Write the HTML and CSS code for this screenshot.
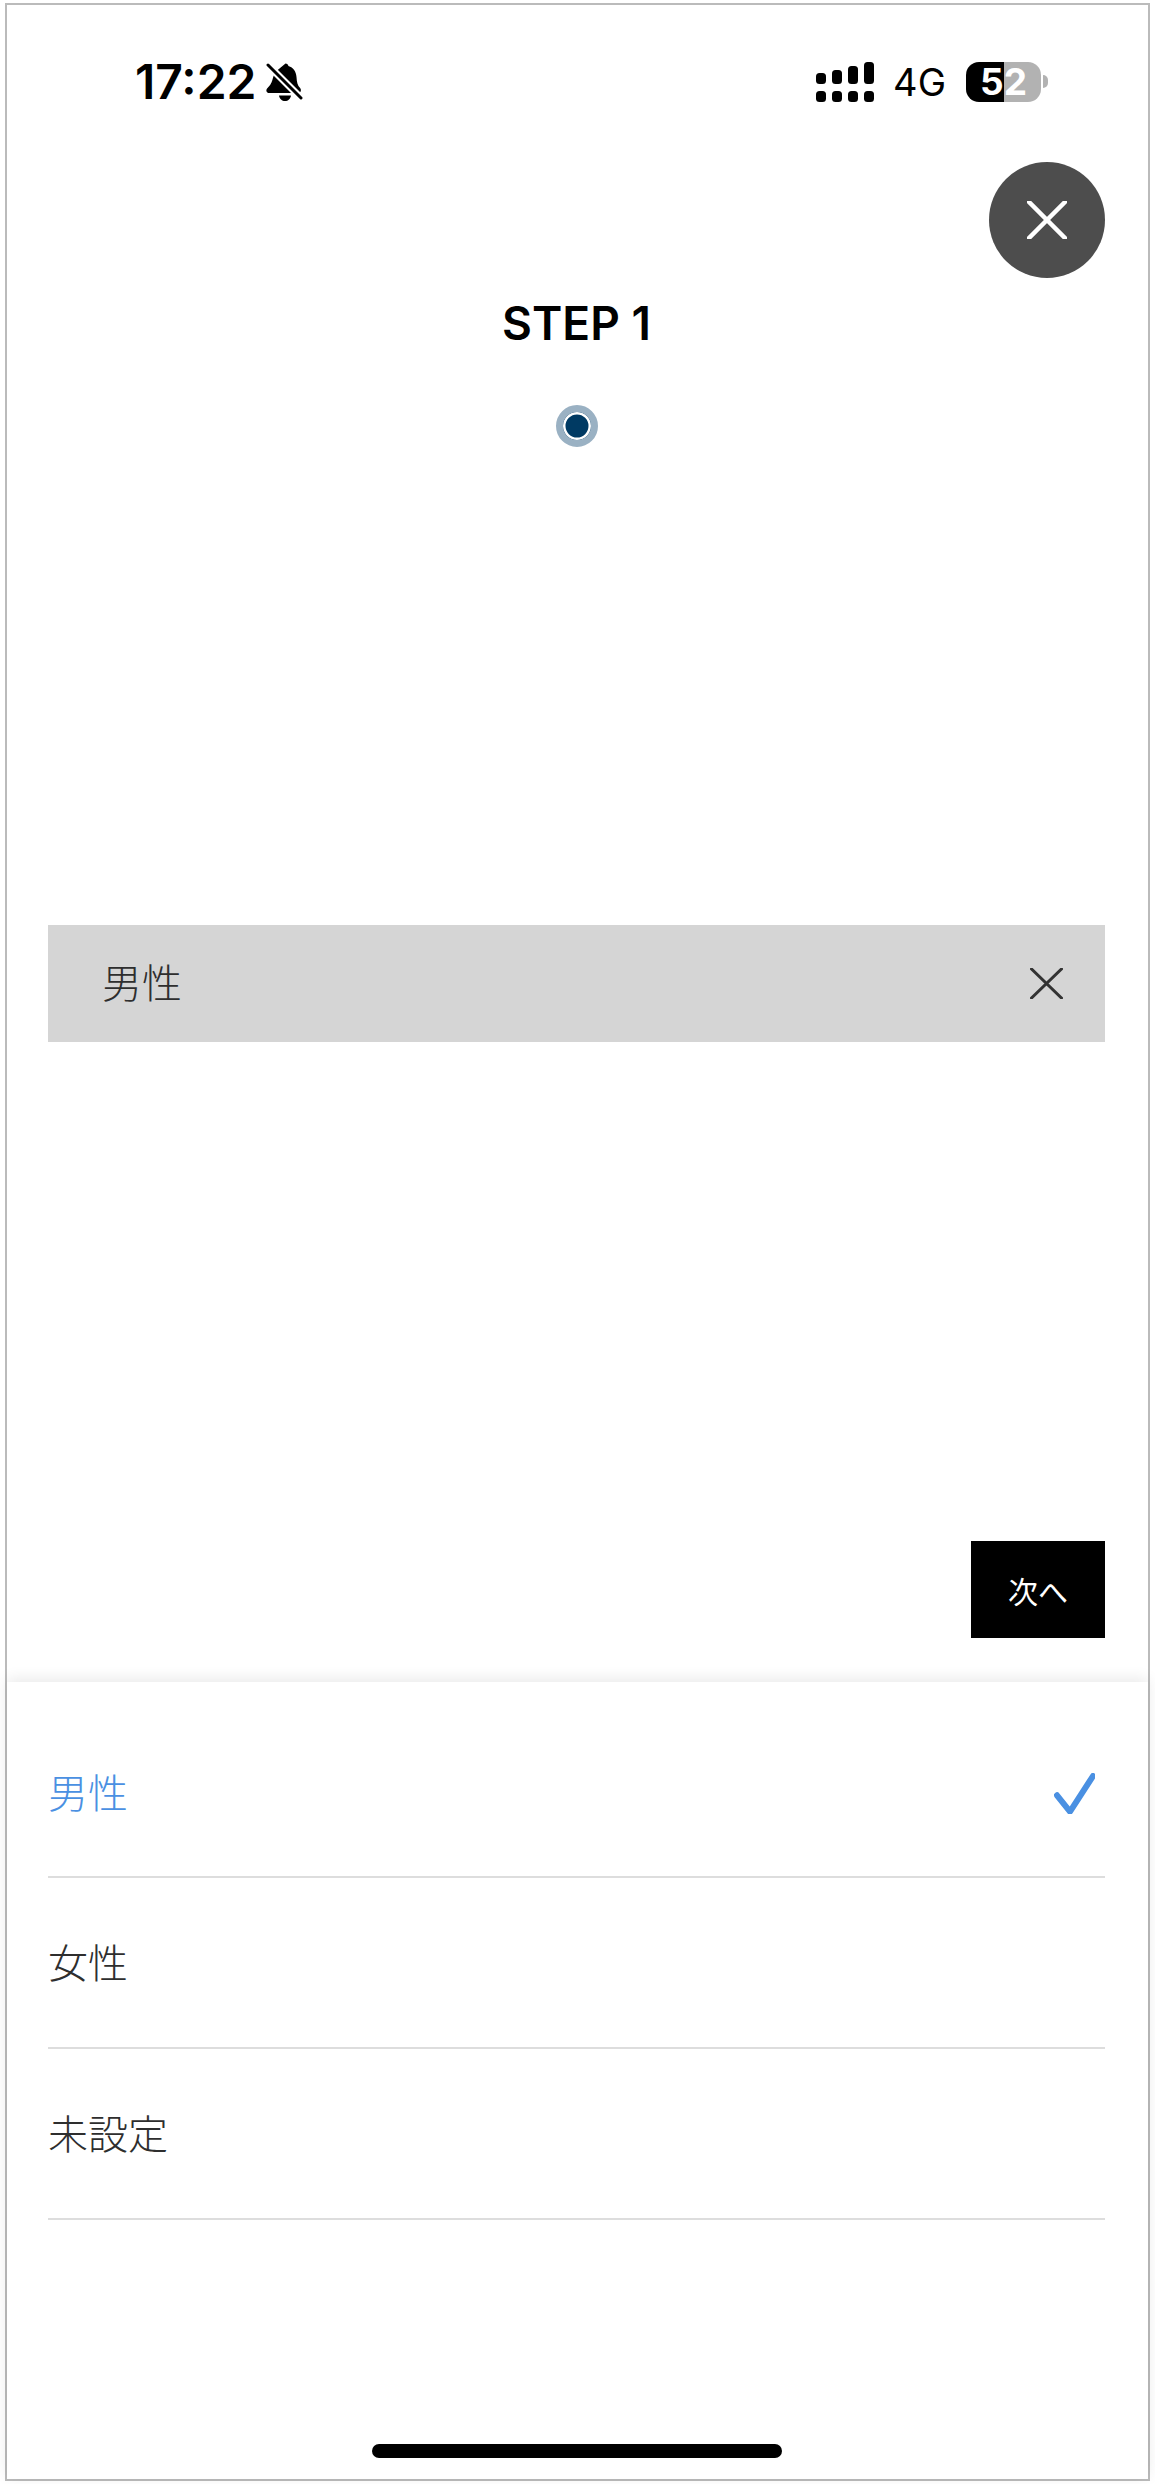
FILE: index.html
```html
<!DOCTYPE html>
<html lang="ja">
<head>
<meta charset="utf-8">
<title>STEP 1</title>
<link rel="stylesheet" href="styles.css">
</head>
<body>
<div class="frame">
  <header class="status">
    <div class="status-left">
      <span class="time">17:22</span>
      <svg class="bell" viewBox="0 0 38 40" width="38" height="40" aria-hidden="true">
        <path d="M20.500 1.500c1.600 0 2.700 1.100 2.900 2.600 5 1.400 7.700 5.500 8.100 11 .3 5 1 8.500 3.600 11 1.500 1.500 1 5-1.800 5H4.200C1.300 31.100.6 28 2.300 26.300c2.700-2.700 4-4.800 5-8 1-4 2.500-8 4.500-9.500z" fill="#000"/>
        <path d="M14 33.500h12c-.5 3.500-3 5.500-6 5.500s-5.500-2-6-5.500z" fill="#000"/>
        <path d="M3 3l33 33" stroke="#fff" stroke-width="7" fill="none"/>
        <path d="M3 3l33 33" stroke="#000" stroke-width="3" stroke-linecap="round" fill="none"/>
      </svg>
    </div>
    <div class="status-right">
      <svg class="signal" viewBox="0 0 58 40" width="58" height="40" aria-hidden="true">
        <rect x="0" y="11" width="10" height="11" rx="3.500"/>
        <rect x="16" y="8" width="10" height="14" rx="3.500"/>
        <rect x="32" y="4" width="10" height="18" rx="3.500"/>
        <rect x="48" y="0" width="10" height="22" rx="3.500"/>
        <rect x="0" y="29" width="10" height="11" rx="3.500"/>
        <rect x="16" y="29" width="10" height="11" rx="3.500"/>
        <rect x="32" y="29" width="10" height="11" rx="3.500"/>
        <rect x="48" y="29" width="10" height="11" rx="3.500"/>
      </svg>
      <span class="net">4G</span>
      <div class="battery"><span class="battery-level">52</span><i class="battery-nub"></i></div>
    </div>
  </header>

  <main class="main">
    <div class="close-row">
      <button class="close" type="button" aria-label="閉じる">
        <svg viewBox="0 0 40 38" width="40" height="38" aria-hidden="true"><path d="M2 1l36 36M38 1L2 37" stroke="#fff" stroke-width="4.500" stroke-linecap="round"/></svg>
      </button>
    </div>
    <h1 class="step">STEP 1</h1>
    <div class="dots"><span class="dot"></span></div>
    <div class="field">
      <span class="field-value">男性</span>
      <svg viewBox="0 0 33 31" width="33" height="31" aria-hidden="true"><path d="M1.500 1l30 29M31.500 1l-30 29" stroke="#333" stroke-width="3" stroke-linecap="round"/></svg>
    </div>
    <div class="actions"><button class="next" type="button">次へ</button></div>
  </main>

  <section class="sheet">
    <ul class="options">
      <li class="option selected">
        <span>男性</span>
        <svg viewBox="0 0 41 41" width="41" height="41" aria-hidden="true"><path d="M3 22.300l13 16.400L39 3" fill="none" stroke="#4a90e2" stroke-width="6" stroke-linecap="round" stroke-linejoin="round"/></svg>
      </li>
      <li class="option"><span>女性</span></li>
      <li class="option"><span>未設定</span></li>
    </ul>
    <div class="home-indicator"></div>
  </section>
</div>
</body>
</html>
```
FILE: styles.css
```css
* { box-sizing: border-box; }

html, body { margin: 0; padding: 0; background: #fff; }

body {
  width: 1155px;
  height: 2484px;
  padding: 3px 5px;
  font-family: Inter, "Noto Sans CJK JP", sans-serif;
  color: #000;
}

.frame {
  width: 1145px;
  height: 2478px;
  border: 2px solid #bbb;
  display: flex;
  flex-direction: column;
  background: #fff;
}

.status {
  height: 157px;
  padding: 57px 107px 0 128px;
  display: flex;
  justify-content: space-between;
  align-items: flex-start;
}

.status-left { display: flex; align-items: center; gap: 9px; height: 40px; }
.time { font-size: 48px; font-weight: 600; line-height: 40px; }
.bell { display: block; }

.status-right { display: flex; align-items: center; height: 40px; }
.signal { display: block; fill: #000; }
.net { font-size: 38px; font-weight: 400; line-height: 40px; margin: 0 20px 0 19px; }

.battery {
  position: relative;
  width: 75px;
  height: 40px;
  border-radius: 13px;
  background: linear-gradient(to right, #000 0 38px, #b2b2b2 38px);
  display: flex;
  align-items: center;
  justify-content: center;
}
.battery-level { color: #fff; font-size: 37px; font-weight: 700; line-height: 40px; }
.battery-nub {
  position: absolute;
  left: 77px;
  top: 13px;
  width: 5px;
  height: 13px;
  border-radius: 0 7px 7px 0;
  background: #b2b2b2;
}

.main { flex: 1; padding: 0 43px 0 41px; display: flex; flex-direction: column; }

.close-row { display: flex; justify-content: flex-end; }
.close {
  width: 116px;
  height: 116px;
  border: 0;
  border-radius: 50%;
  padding: 0;
  background: #4d4d4d;
  display: flex;
  align-items: center;
  justify-content: center;
}

.step {
  margin: 17px 0 0;
  text-align: center;
  font-size: 46px;
  font-weight: 600;
  line-height: 56px;
  color: #000;
}

.dots { display: flex; justify-content: center; margin-top: 54px; }
.dot {
  width: 42px;
  height: 42px;
  border-radius: 50%;
  background: #003a63;
  border: 7.500px solid #9ab1c3;
  box-shadow: inset 0 0 0 2.500px #fff;
}

.field {
  margin-top: 478px;
  height: 117px;
  background: #d5d5d5;
  padding: 0 42px 0 54px;
  display: flex;
  align-items: center;
  justify-content: space-between;
}
.field-value { font-size: 40px; font-weight: 300; color: #2e2e2e; line-height: 1; }
.field svg { display: block; }

.actions { display: flex; justify-content: flex-end; margin-top: 499px; }
.next {
  width: 134px;
  height: 97px;
  border: 0;
  background: #000;
  color: #fff;
  font-family: inherit;
  font-size: 30px;
  font-weight: 400;
  padding: 0;
}

.sheet {
  height: 797px;
  flex: none;
  padding: 0 43px 0 41px;
  background: #fff;
  box-shadow: 0 -3px 14px rgba(0, 0, 0, 0.09);
  display: flex;
  flex-direction: column;
  position: relative;
}

.options { list-style: none; margin: 26px 0 0; padding: 0; }
.option {
  height: 171px;
  border-bottom: 2px solid #ddd;
  display: flex;
  align-items: center;
  justify-content: space-between;
  font-size: 40px;
  line-height: 1;
  font-weight: 300;
  color: #2e2e2e;
  padding: 3px 10px 0 0;
}
.option:first-child { height: 170px; }
.option.selected { color: #4a90e2; }
.option svg { display: block; }

.home-indicator {
  width: 410px;
  height: 14px;
  border-radius: 7px;
  background: #000;
  margin: auto auto 21px;
}
```
